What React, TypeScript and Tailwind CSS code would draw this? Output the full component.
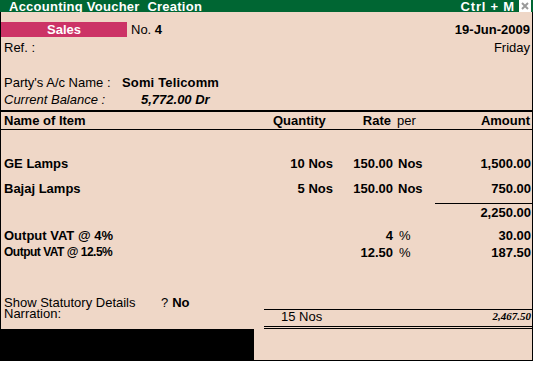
import React from "react";

interface IItemRow {
  name?: React.ReactNode;
  qty?: React.ReactNode;
  rate?: React.ReactNode;
  per?: React.ReactNode;
  amount?: React.ReactNode;
  className?: string;
  nameClass?: string;
  perClass?: string;
  amountClass?: string;
}

const ItemRow = ({ name, qty, rate, per, amount, className = "", nameClass = "", perClass = "pl-[5px]", amountClass = "" }: IItemRow) => (
  <div className={`flex items-center ${className}`}>
    <div className={`w-[272px] pl-[3px] whitespace-pre ${nameClass}`}>{name}</div>
    <div className="w-[60px] text-right font-bold">{qty}</div>
    <div className="w-[60px] text-right font-bold">{rate}</div>
    <div className={`w-[40px] ${perClass}`}>{per}</div>
    <div className="flex-1 flex justify-end h-full">
      <div className={`h-full flex items-center justify-end pr-[1px] font-bold ${amountClass}`}>{amount}</div>
    </div>
  </div>
);

const CloseIcon = () => (
  <svg width="8" height="8" viewBox="0 0 8 8">
    <path d="M1 1 L7 7 M7 1 L1 7" stroke="#9a9a9a" strokeWidth="2" />
  </svg>
);

export default function App() {
  return (
    <div className="w-[541px] h-[368px] bg-white font-['Liberation_Sans',Arial,sans-serif] text-[13px] leading-none text-black">
      <div className="w-[533px] flex flex-col">
        {/* title bar */}
        <div className="h-[12px] bg-[#006633] flex items-center text-white font-bold">
          <span className="pl-[9px] tracking-[0.25px] whitespace-pre">Accounting Voucher  Creation</span>
          <span className="ml-auto tracking-[0.8px]">Ctrl + M</span>
          <span className="ml-[4px] mr-[2px] w-[12px] h-[12px] bg-white flex items-center justify-center">
            <CloseIcon />
          </span>
        </div>

        <div className="h-[349px] bg-[#efd7c7] border-l border-r border-b border-black flex flex-col">
          {/* voucher type + date */}
          <div className="mt-[10px] h-[15px] flex items-center">
            <div className="w-[126px] h-full bg-[#cc3366] text-white font-bold flex items-center justify-center">Sales</div>
            <span className="ml-[4px]">
              No. <b>4</b>
            </span>
            <span className="ml-auto pr-[2px] font-bold">19-Jun-2009</span>
          </div>
          <div className="mt-[3px] h-[14px] flex items-center">
            <span className="pl-[3px]">Ref. :</span>
            <span className="ml-auto pr-[2px]">Friday</span>
          </div>

          {/* party */}
          <div className="mt-[20px] h-[16px] flex items-center">
            <span className="w-[121px] pl-[3px]">Party's A/c Name :</span>
            <span className="font-bold tracking-[0.15px]">Somi Telicomm</span>
          </div>
          <div className="h-[18px] flex items-center italic">
            <span className="w-[140px] pl-[3px]">Current Balance :</span>
            <span className="font-bold">5,772.00 Dr</span>
          </div>

          {/* table header */}
          <div className="mt-[2px] border-t-2 border-b border-black h-[20px] flex items-center">
            <div className="w-[272px] pl-[3px] font-bold">Name of Item</div>
            <div className="w-[60px] text-right font-bold pr-[8px]">Quantity</div>
            <div className="w-[60px] text-right font-bold pr-[2px]">Rate</div>
            <div className="w-[40px] pl-[4px]">per</div>
            <div className="flex-1 text-right font-bold pr-[2px]">Amount</div>
          </div>

          {/* items */}
          <div className="mt-[21px]">
            <ItemRow className="h-[25px]" nameClass="font-bold" name="GE Lamps" qty="10 Nos" rate="150.00" per={<b>Nos</b>} amount="1,500.00" />
            <ItemRow className="h-[24px]" nameClass="font-bold" name="Bajaj Lamps" qty="5 Nos" rate="150.00" per={<b>Nos</b>} amount="750.00" />
            <div className="pt-[3px]">
              <ItemRow className="h-[18px]" amountClass="w-[97px] border-t border-black" amount="2,250.00" />
            </div>
          </div>

          {/* taxes */}
          <div className="mt-[6px]">
            <ItemRow className="h-[17px]" nameClass="font-bold" name="Output VAT @ 4%" rate="4" perClass="pl-[6px]" per="%" amount="30.00" />
            <ItemRow
              className="h-[16px]"
              nameClass="font-bold text-[12px] tracking-[-0.5px]"
              name="Output VAT @ 12.5%"
              rate="12.50"
              perClass="pl-[6px]"
              per="%"
              amount="187.50"
            />
          </div>

          <div className="flex-1" />

          {/* footer */}
          <div className="h-[65px] flex">
            <div className="w-[253px] flex flex-col pt-[2px]">
              <div className="h-[11px] leading-[11px] flex items-center pl-[3px]">
                <span className="w-[157px]">Show Statutory Details</span>
                <span>?</span>
                <span className="ml-[4px] font-bold">No</span>
              </div>
              <div className="h-[11px] leading-[11px] flex items-center pl-[3px]">Narration:</div>
              <div className="flex-1" />
              <div className="h-[31px] bg-black" />
            </div>
            <div className="flex-1 pl-[10px]">
              <div className="mt-[14px] border-t border-b-[3px] border-double border-black h-[20px] flex items-center pb-[3px]">
                <span className="pl-[17px]">15 Nos</span>
                <span className="ml-auto pr-[1px] font-['Liberation_Serif',serif] font-bold italic text-[11px]">2,467.50</span>
              </div>
            </div>
          </div>
        </div>
      </div>
    </div>
  );
}
